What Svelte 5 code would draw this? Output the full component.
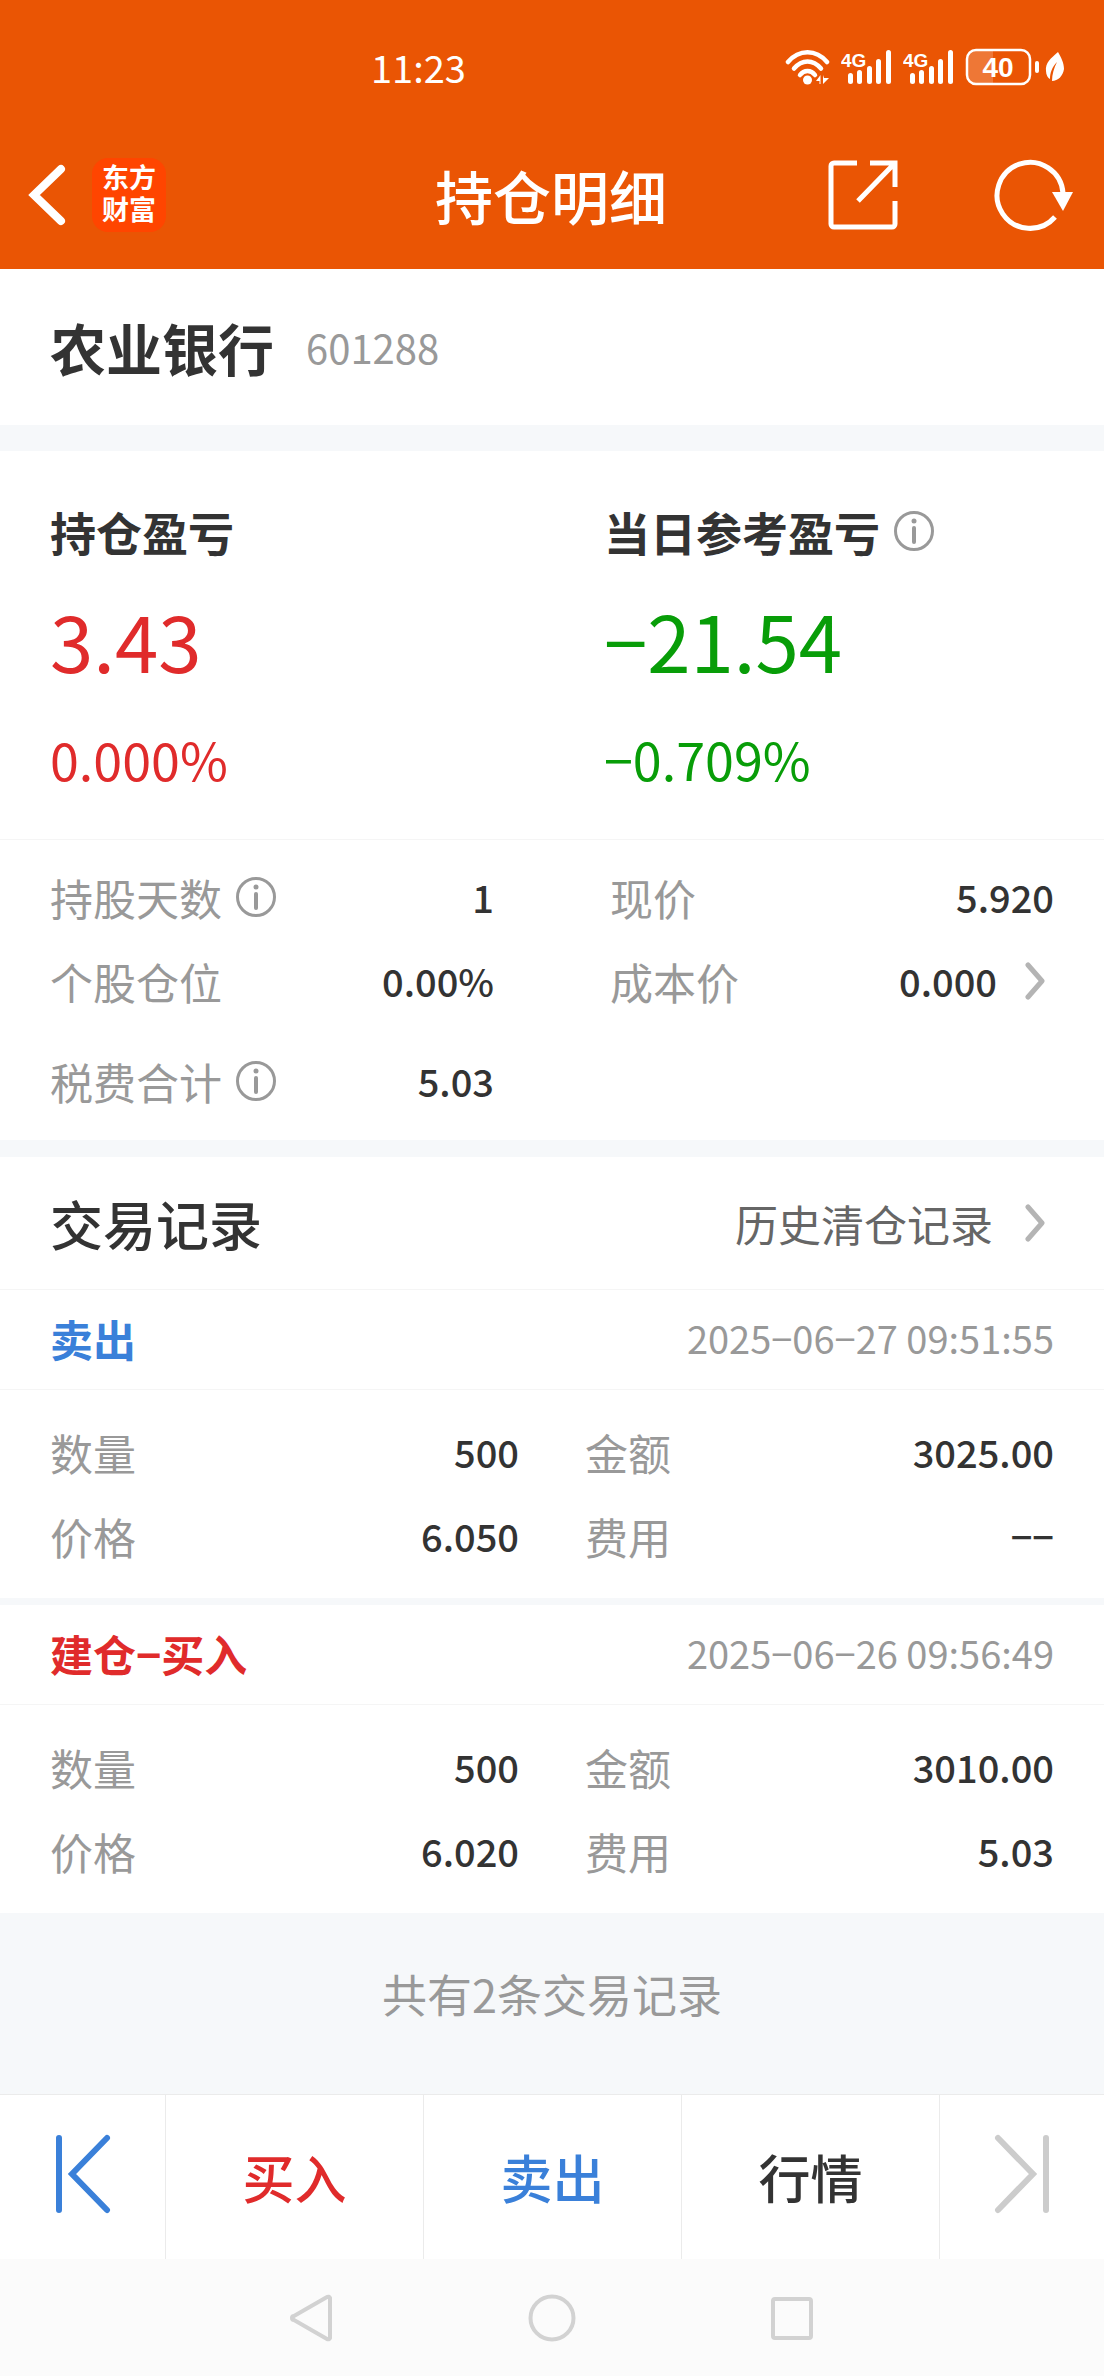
<script>
  const stock = { name: "农业银行", code: "601288" };

  const profits = [
    { label: "持仓盈亏", value: "3.43", rate: "0.000%", trend: "up" },
    {
      label: "当日参考盈亏",
      value: "−21.54",
      rate: "−0.709%",
      trend: "down",
      info: true,
    },
  ];

  const details = [
    { label: "持股天数", value: "1", info: true },
    { label: "现价", value: "5.920" },
    { label: "个股仓位", value: "0.00%" },
    { label: "成本价", value: "0.000", more: true },
    { label: "税费合计", value: "5.03", info: true, last: true },
  ];

  const records = [
    {
      type: "卖出",
      kind: "sell",
      time: "2025−06−27 09:51:55",
      fields: [
        ["数量", "500"],
        ["金额", "3025.00"],
        ["价格", "6.050"],
        ["费用", "−−"],
      ],
    },
    {
      type: "建仓−买入",
      kind: "buy",
      time: "2025−06−26 09:56:49",
      fields: [
        ["数量", "500"],
        ["金额", "3010.00"],
        ["价格", "6.020"],
        ["费用", "5.03"],
      ],
    },
  ];
</script>

{#snippet infoButton(label)}
  <button class="info" aria-label="{label}说明">
    <svg width="40" height="40" viewBox="0 0 40 40">
      <circle cx="20" cy="20" r="18.5" fill="none" stroke="#999" stroke-width="3" />
      <circle cx="20" cy="10" r="2.5" fill="#999" />
      <path d="M20 17v14" stroke="#999" stroke-width="4" stroke-linecap="round" />
    </svg>
  </button>
{/snippet}

{#snippet chevron()}
  <svg class="chevron" width="20" height="38" viewBox="0 0 20 38">
    <path
      d="M3 3l14 16L3 35"
      fill="none"
      stroke="#b4b4b4"
      stroke-width="5"
      stroke-linecap="round"
      stroke-linejoin="round"
    />
  </svg>
{/snippet}

{#snippet signal()}
  <svg width="52" height="36" viewBox="0 0 52 36" fill="#fff">
    <text class="net" x="0" y="18">4G</text>
    <rect x="7" y="24" width="5" height="11" rx="2.5" />
    <rect x="16" y="21" width="5" height="14" rx="2.5" />
    <rect x="26" y="17" width="5" height="18" rx="2.5" />
    <rect x="35" y="10" width="5" height="25" rx="2.5" />
    <rect x="45" y="1" width="5" height="34" rx="2.5" />
  </svg>
{/snippet}

<header>
  <div class="status">
    <time>11:23</time>
    <div class="status-icons">
      <svg width="46" height="36" viewBox="0 0 46 36" fill="none" stroke="#fff" stroke-width="4.5" stroke-linecap="round">
        <path d="M3 13C14 0 31 0 42 13" />
        <path d="M9 19.5C17 10 28 10 36 19.5" />
        <path d="M15 26C19 20.5 26 20.5 30 26" />
        <circle cx="22.5" cy="31" r="4.5" fill="#fff" stroke="none" />
        <path d="M31 32l4.5-6v9h-1v-3zM38 26v9l6-6h-5z" fill="#fff" stroke="none" />
      </svg>
      {@render signal()}
      {@render signal()}
      <svg width="99" height="38" viewBox="0 0 99 38" fill="#fff">
        <path d="M11 3h17v32H11a8 8 0 0 1-8-8V11a8 8 0 0 1 8-8z" fill-opacity=".2" />
        <rect x="2" y="2" width="63" height="34" rx="9" fill="none" stroke="#fff" stroke-width="2.5" />
        <rect x="70" y="13" width="4" height="12" rx="2" />
        <text class="battery" x="33" y="29" text-anchor="middle">40</text>
        <path d="M93 4C86 10 80 15 81 23c0 4 2 7 4 8 0-6 2-12 7-17-3 6-5 12-5 19 6 0 11-5 12-12 0-6-3-12-6-17z" />
      </svg>
    </div>
  </div>

  <nav class="appbar">
    <div class="left">
      <button aria-label="返回">
        <svg width="38" height="62" viewBox="0 0 38 62" fill="none" stroke="#fff" stroke-width="8" stroke-linecap="round">
          <path d="M33 5L6 31l27 26" />
        </svg>
      </button>
      <a class="logo" href="#home"><span>东方</span><span>财富</span></a>
    </div>
    <h1>持仓明细</h1>
    <div class="right">
      <button aria-label="分享">
        <svg width="70" height="70" viewBox="0 0 70 70" fill="none" stroke="#fff" stroke-width="5">
          <path d="M29 3H6a3 3 0 0 0-3 3v58a3 3 0 0 0 3 3h58a3 3 0 0 0 3-3V41" />
          <path d="M42 3h25v24M66 4L30 41" />
        </svg>
      </button>
      <button aria-label="刷新">
        <svg width="80" height="72" viewBox="0 0 80 72" fill="none" stroke="#fff" stroke-width="5">
          <path d="M61 58A33 33 0 1 1 69 34" />
          <path d="M58 33h21L69 52z" fill="#fff" stroke="none" />
        </svg>
      </button>
    </div>
  </nav>
</header>

<main>
  <section class="stock">
    <h2>{stock.name}</h2>
    <span class="code">{stock.code}</span>
  </section>

  <section class="profits">
    {#each profits as item}
      <div class={item.trend}>
        <h3>
          {item.label}
          {#if item.info}{@render infoButton(item.label)}{/if}
        </h3>
        <p class="amount">{item.value}</p>
        <p class="rate">{item.rate}</p>
      </div>
    {/each}
  </section>

  <dl class="details">
    {#each details as item}
      <div class="row" class:last={item.last}>
        <dt>
          {item.label}
          {#if item.info}{@render infoButton(item.label)}{/if}
        </dt>
        <dd class:more={item.more}>
          {item.value}
          {#if item.more}{@render chevron()}{/if}
        </dd>
      </div>
    {/each}
  </dl>

  <section class="history">
    <h2>交易记录</h2>
    <a href="#history">历史清仓记录 {@render chevron()}</a>
  </section>

  {#each records as record}
    <article>
      <div class="record-head">
        <h3 class={record.kind}>{record.type}</h3>
        <time>{record.time}</time>
      </div>
      <dl class="record">
        {#each record.fields as [label, value]}
          <div class="row">
            <dt>{label}</dt>
            <dd>{value}</dd>
          </div>
        {/each}
      </dl>
    </article>
  {/each}

  <p class="total">共有2条交易记录</p>
</main>

<footer>
  <div class="toolbar">
    <button class="step" aria-label="上一个">
      <svg width="56" height="80" viewBox="0 0 56 80" fill="none" stroke="#3a80d9" stroke-width="6" stroke-linecap="round">
        <path d="M4 4v72M52 4L17 40l35 36" />
      </svg>
    </button>
    <button class="buy">买入</button>
    <button class="sell">卖出</button>
    <button>行情</button>
    <button class="step" aria-label="下一个" disabled>
      <svg width="56" height="80" viewBox="0 0 56 80" fill="none" stroke="#ccc" stroke-width="6" stroke-linecap="round">
        <path d="M52 4v72M4 4l35 36L4 76" />
      </svg>
    </button>
  </div>
  <div class="system">
    <button aria-label="系统返回">
      <svg width="48" height="48" viewBox="0 0 48 48">
        <path d="M42 4v40a2 2 0 0 1-3 1L6 26a2 2 0 0 1 0-4L39 3a2 2 0 0 1 3 1z" />
      </svg>
    </button>
    <button aria-label="主屏幕">
      <svg width="48" height="48" viewBox="0 0 48 48"><circle cx="24" cy="24" r="21.5" /></svg>
    </button>
    <button aria-label="最近任务">
      <svg width="48" height="48" viewBox="0 0 48 48"><rect x="5" y="5" width="38" height="39" rx="2" /></svg>
    </button>
  </div>
</footer>

<style>
  :global(body) {
    margin: 0;
    background: #fff;
    color: #333;
    font-family: "Noto Sans CJK SC", sans-serif;
    font-size: 43px;
    line-height: 60px;
  }
  h1,
  h2,
  h3,
  p,
  dl,
  dd {
    margin: 0;
    font-weight: 400;
  }
  button {
    display: flex;
    align-items: center;
    justify-content: center;
    padding: 0;
    border: 0;
    background: none;
    color: inherit;
    font: inherit;
    cursor: pointer;
  }
  a {
    color: inherit;
    text-decoration: none;
  }
  svg {
    display: block;
    flex: none;
  }

  header {
    background: #ea5504;
    color: #fff;
  }
  .status {
    display: flex;
    align-items: center;
    justify-content: space-between;
    height: 106px;
    padding: 14px 40px 0 371px;
  }
  .status time {
    font-size: 38px;
  }
  .status-icons {
    display: flex;
    align-items: center;
    gap: 10px;
  }
  .net {
    font: bold 19px "Liberation Sans", sans-serif;
  }
  .battery {
    font: bold 28px "Liberation Sans", sans-serif;
  }
  .appbar {
    display: grid;
    grid-template-columns: 1fr auto 1fr;
    align-items: center;
    height: 149px;
    padding: 0 30px 0 28px;
  }
  .appbar h1 {
    font-size: 58px;
    font-weight: 500;
  }
  .left,
  .right {
    display: flex;
    align-items: center;
    gap: 26px;
  }
  .right {
    justify-content: flex-end;
    gap: 96px;
  }
  .logo {
    display: flex;
    flex-direction: column;
    align-items: center;
    justify-content: center;
    width: 74px;
    height: 74px;
    border-radius: 16px;
    background: #ff4500;
    font-family: "Liberation Sans", "Noto Sans CJK SC", sans-serif;
    font-size: 27px;
    font-weight: 700;
    line-height: 32px;
  }

  .stock {
    display: flex;
    align-items: center;
    gap: 32px;
    height: 156px;
    padding: 0 50px;
    border-bottom: 26px solid #f6f8fa;
  }
  .stock h2 {
    font-size: 56px;
    font-weight: 700;
  }
  .code {
    color: #999;
    font-size: 40px;
  }

  .profits {
    display: grid;
    grid-template-columns: 1fr 1fr;
    gap: 104px;
    padding: 48px 50px 50px;
    border-bottom: 1px solid #f5f5f5;
  }
  .profits h3 {
    display: flex;
    align-items: center;
    gap: 14px;
    font-size: 46px;
    font-weight: 700;
    line-height: 64px;
    white-space: nowrap;
  }
  .amount {
    margin: 26px 0 40px;
    font-size: 78px;
    line-height: 100px;
  }
  .rate {
    font-size: 52px;
  }
  .up p,
  .buy {
    color: #e02b2b;
  }
  .down p {
    color: #089d08;
  }
  .sell {
    color: #3a80d9;
  }

  .details,
  .record {
    display: grid;
    grid-template-columns: 1fr 1fr;
    column-gap: 116px;
    padding: 15px 50px 17px;
  }
  .details {
    border-bottom: 17px solid #f6f8fa;
  }
  .row {
    display: flex;
    align-items: center;
    justify-content: space-between;
    height: 84px;
  }
  .last {
    margin-top: 16px;
  }
  dt {
    display: flex;
    align-items: center;
    gap: 14px;
    color: #999;
  }
  dd {
    display: flex;
    align-items: center;
    font-size: 38px;
    font-weight: 500;
  }
  .more {
    gap: 28px;
    padding-right: 9px;
  }

  .history {
    display: flex;
    align-items: center;
    justify-content: space-between;
    height: 132px;
    padding: 0 59px 0 50px;
  }
  .history h2 {
    font-size: 53px;
    font-weight: 500;
  }
  .history a {
    display: flex;
    align-items: center;
    gap: 32px;
    color: #666;
  }

  .record-head {
    display: flex;
    align-items: center;
    justify-content: space-between;
    height: 95px;
    padding: 0 50px 4px;
    border-bottom: 1px solid #f5f5f5;
  }
  .record-head h3 {
    font-size: 43px;
    font-weight: 700;
  }
  .record-head time {
    color: #999;
    font-size: 38px;
  }
  article:first-of-type .record-head {
    border-top: 1px solid #f5f5f5;
  }
  .record {
    column-gap: 66px;
    padding: 20px 50px;
  }
  article + article {
    border-top: 7px solid #f6f8fa;
  }

  .total {
    padding: 51px 0 70px;
    background: #f6f8fa;
    color: #999;
    font-size: 45px;
    text-align: center;
  }

  .toolbar {
    display: grid;
    grid-template-columns: 165px 1fr 1fr 1fr 165px;
    height: 164px;
    border-top: 1px solid #ebebeb;
  }
  .toolbar button {
    font-size: 52px;
    font-weight: 500;
  }
  .toolbar button + button {
    border-left: 1px solid #ebebeb;
  }
  .toolbar .step {
    padding-bottom: 6px;
  }
  .system {
    display: flex;
    align-items: center;
    justify-content: center;
    gap: 192px;
    height: 117px;
    background: #fbfbfb;
  }
  .system svg {
    fill: none;
    stroke: #d2d2d2;
    stroke-width: 4;
  }
</style>
